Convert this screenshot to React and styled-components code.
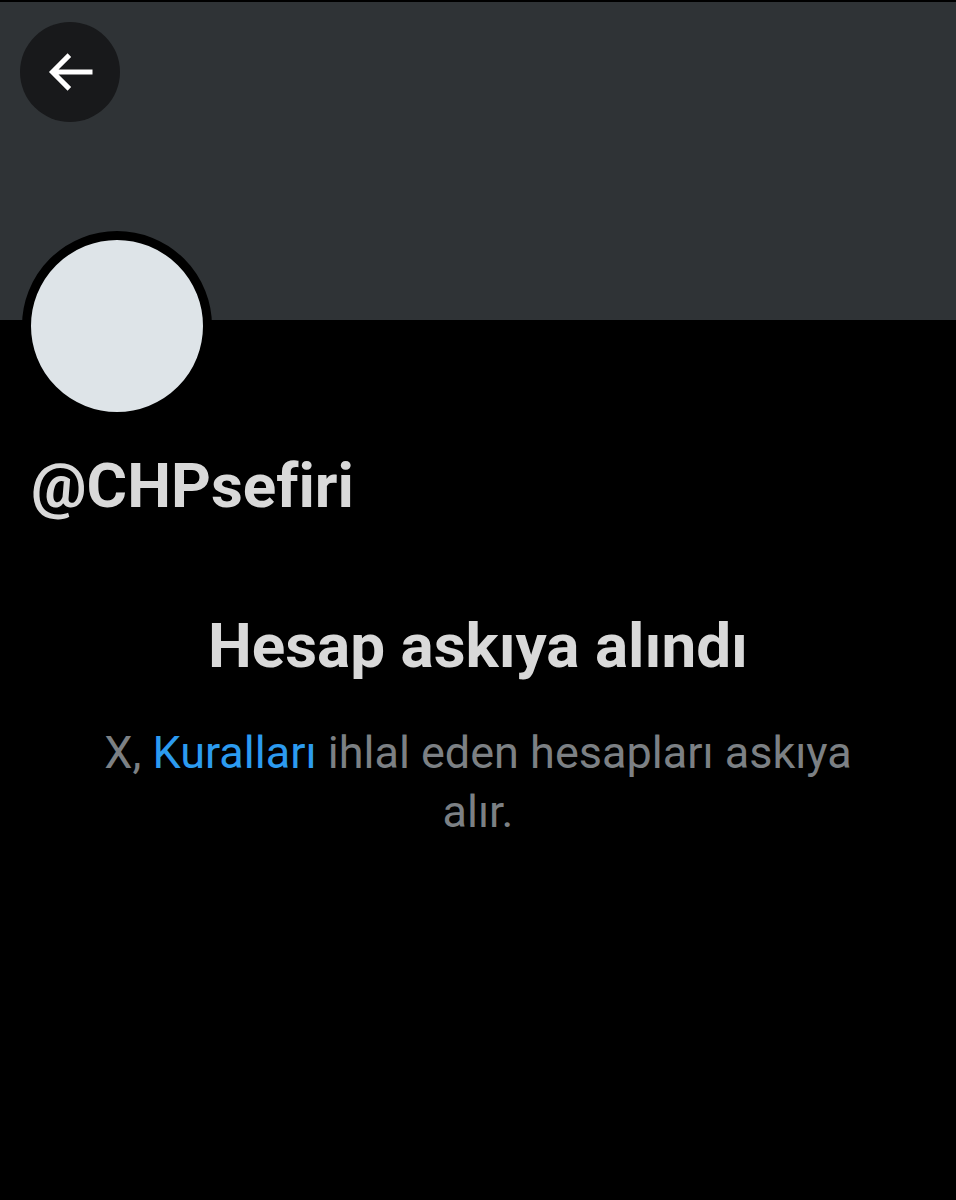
import React from 'react';
import styled, { createGlobalStyle } from 'styled-components';

const GlobalStyle = createGlobalStyle`
  * {
    box-sizing: border-box;
  }

  body {
    margin: 0;
    background: #000;
    font-family: Roboto, 'Liberation Sans', sans-serif;
    font-variant-ligatures: none;
  }
`;

const Page = styled.main`
  min-height: 100vh;
  padding-top: 2px;
  background: #000;
  color: #d9d9d9;
`;

const Banner = styled.header`
  height: 318px;
  padding: 20px;
  background: #2f3336;
`;

const BackButton = styled.button`
  display: flex;
  align-items: center;
  justify-content: center;
  width: 100px;
  height: 100px;
  padding: 0;
  border: none;
  border-radius: 50%;
  background: #18191b;
  color: #fff;
  cursor: pointer;

  svg {
    width: 60px;
    height: 60px;
    fill: currentColor;
  }
`;

const Profile = styled.section`
  padding: 0 22px;
`;

// Overlaps the lower edge of the banner
const Avatar = styled.div`
  width: 190px;
  height: 190px;
  margin-top: -89px;
  border: 9px solid #000;
  border-radius: 50%;
  background: #dee4e8;
`;

const Handle = styled.h1`
  margin: 29px 0 0;
  padding: 0 9px;
  font-size: 62px;
  font-weight: 700;
  line-height: 72px;
`;

const Notice = styled.section`
  padding: 88px 88px 0;
  text-align: center;
`;

const NoticeTitle = styled.h2`
  margin: 0;
  font-size: 62px;
  font-weight: 700;
  line-height: 72px;
`;

const NoticeText = styled.p`
  margin: 41px 0 0;
  color: #7c8084;
  font-size: 45px;
  line-height: 59px;
`;

const RulesLink = styled.a`
  color: #2c9bf0;
  text-decoration: none;

  &:hover {
    text-decoration: underline;
  }
`;

const App = () => {
  return (
    <>
      <GlobalStyle />
      <Page>
        <Banner>
          <BackButton type="button" aria-label="Geri">
            <svg viewBox="0 0 24 24" aria-hidden="true">
              <path d="M7.414 13l5.043 5.04-1.414 1.42L3.586 12l7.457-7.46 1.414 1.42L7.414 11H21v2H7.414z" />
            </svg>
          </BackButton>
        </Banner>

        <Profile>
          <Avatar />
          <Handle>@CHPsefiri</Handle>
        </Profile>

        <Notice>
          <NoticeTitle>Hesap askıya alındı</NoticeTitle>
          <NoticeText>
            X, <RulesLink href="#rules">Kuralları</RulesLink> ihlal eden hesapları askıya alır.
          </NoticeText>
        </Notice>
      </Page>
    </>
  );
};

export default App;
